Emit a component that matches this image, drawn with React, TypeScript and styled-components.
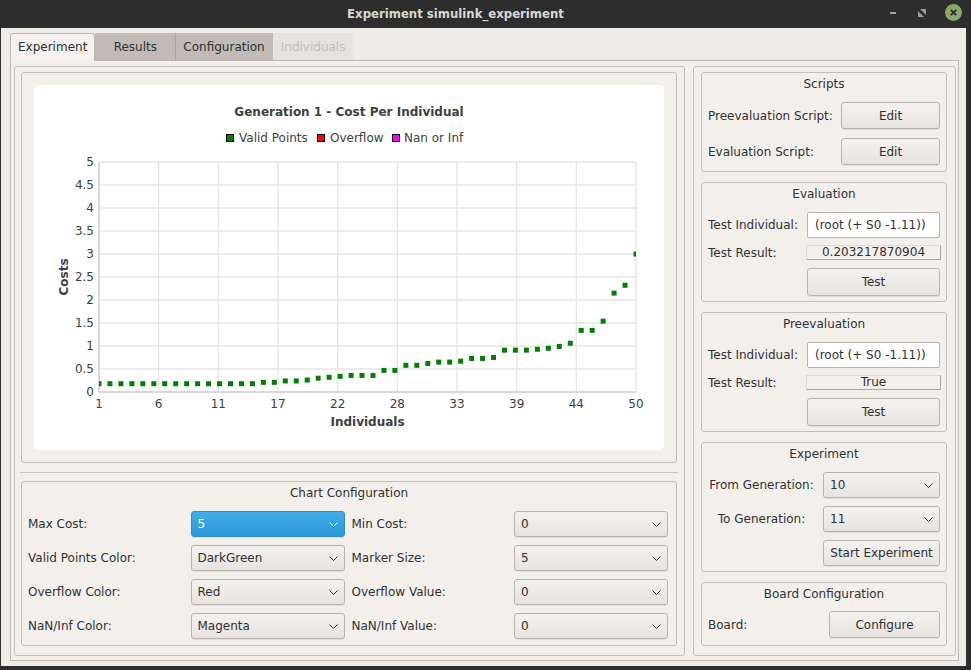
import React from 'react';
import styled, { createGlobalStyle } from 'styled-components';

const GlobalStyle = createGlobalStyle`
  html, body { margin: 0; padding: 0; background: #2d2d2d; }
  body {
    font-family: "DejaVu Sans", "Noto Sans", sans-serif;
    font-size: 12px;
    color: #2f3134;
  }
  * { box-sizing: border-box; }
`;

const Window = styled.div`
  width: 971px;
  height: 670px;
  background: #2d2d2d;
  display: flex;
  flex-direction: column;
  padding: 0 5px 4px 1px;
`;

const TitleBar = styled.div`
  height: 28px;
  display: grid;
  grid-template-columns: 1fr 82px;
  align-items: center;
`;

const TitleText = styled.div`
  padding-left: 26px;
  text-align: center;
  font-family: "DejaVu Sans Condensed", "DejaVu Sans", sans-serif;
  font-weight: bold;
  font-size: 13px;
  color: #d8d8d8;
  padding-bottom: 2px;
`;

const WinButtons = styled.div`
  display: flex;
  align-items: center;
  gap: 17px;
  padding-left: 3px;
  padding-bottom: 3px;
`;

const WinIcon = styled.div<{ $w: number }>`
  width: ${(p) => p.$w}px;
  height: ${(p) => p.$w}px;
  display: flex;
  align-items: center;
  justify-content: center;
`;

const Content = styled.div`
  flex: 1;
  background: #efebe7;
  display: flex;
  flex-direction: column;
  padding: 5px 7px 5px 9px;
`;

const TabBar = styled.div`
  display: flex;
  height: 27px;
  align-items: stretch;
  position: relative;
  z-index: 1;
`;

const Tab = styled.div<{ $state: 'active' | 'normal' | 'disabled'; $sep?: boolean }>`
  min-width: 80px;
  padding: 0 ${(p) => (p.$state === 'active' ? 7 : 8)}px;
  display: flex;
  align-items: center;
  justify-content: center;
  font-size: 12px;
  color: ${(p) => (p.$state === 'disabled' ? '#c3beb9' : '#2f3134')};
  background: ${(p) =>
    p.$state === 'active' ? '#f4f1ee' : p.$state === 'disabled' ? '#e6e2de' : '#c0bbb6'};
  border: ${(p) => (p.$state === 'active' ? '1px solid #bdb8b3' : 'none')};
  border-bottom: none;
  box-shadow: ${(p) => (p.$sep ? 'inset 1px 0 0 #a9a49f' : 'none')};
  border-radius: ${(p) => (p.$state === 'active' ? '3px 3px 0 0' : '0')};
  margin-bottom: ${(p) => (p.$state === 'active' ? '-1px' : '0')};
  padding-bottom: ${(p) => (p.$state === 'active' ? '1px' : '0')};
`;

const Pane = styled.div`
  flex: 1;
  border: 1px solid #bdb8b3;
  background: #f3f0ec;
  display: grid;
  grid-template-columns: 1fr 263px;
  gap: 8px;
  padding: 5px 2px 4px 3px;
`;

const Frame = styled.div`
  border: 1px solid #c3beb9;
  border-radius: 3px;
  display: flex;
  flex-direction: column;
`;

const LeftFrame = styled(Frame)`
  padding: 5px 7px 9px 6px;
`;

const RightFrame = styled(Frame)`
  padding: 5px 8px 9px 7px;
  gap: 10px;
`;

const ChartFrame = styled.div`
  height: 391px;
  border: 1px solid #c3beb9;
  border-radius: 3px;
  padding: 12px;
  display: flex;
`;

const ChartCard = styled.div`
  flex: 1;
  background: #ffffff;
  border-radius: 5px;
  overflow: hidden;
`;

const Splitter = styled.div`
  height: 18px;
  margin: 0 -1px;
  display: flex;
  align-items: center;
  &::after {
    content: '';
    flex: 1;
    height: 1px;
    background: #c8c3be;
  }
`;

const GroupBox = styled.div<{ $h?: number }>`
  border: 1px solid #c3beb9;
  border-radius: 3px;
  display: flex;
  flex-direction: column;
  ${(p) => (p.$h ? `height: ${p.$h}px;` : 'flex: 1;')}
`;

const GroupTitle = styled.div`
  height: 22px;
  line-height: 22px;
  text-align: center;
  font-size: 12px;
`;

const GroupBody = styled.div<{ $gap: number; $pad?: string }>`
  display: flex;
  flex-direction: column;
  gap: ${(p) => p.$gap}px;
  padding: ${(p) => p.$pad || '7px 6px 6px 6px'};
`;

const ConfigGrid = styled.div`
  display: grid;
  grid-template-columns: 1fr 154px 1fr 154px;
  grid-auto-rows: 26px;
  column-gap: 7px;
  row-gap: 8px;
  align-items: center;
  padding: 7px 8px 6px 6px;
`;

const Row = styled.div<{ $h: number; $ctl: number; $center?: boolean }>`
  display: grid;
  grid-template-columns: 1fr ${(p) => p.$ctl}px;
  column-gap: 8px;
  height: ${(p) => p.$h}px;
  align-items: center;
  & > span {
    text-align: ${(p) => (p.$center ? 'center' : 'left')};
  }
`;

const Label = styled.span`
  font-size: 12px;
  white-space: nowrap;
`;

const Button = styled.div<{ $h?: number }>`
  height: ${(p) => p.$h || 27}px;
  display: flex;
  align-items: center;
  justify-content: center;
  background: linear-gradient(to bottom, #f4f2ef, #e7e3df);
  border: 1px solid #b8b3ae;
  border-radius: 3px;
  box-shadow: 0 1px 0 rgba(0, 0, 0, 0.07);
  font-size: 12px;
  white-space: nowrap;
`;

const ComboBox = styled.div<{ $focus?: boolean }>`
  height: 26px;
  display: flex;
  align-items: center;
  justify-content: space-between;
  padding: 0 6px 0 6px;
  border-radius: 3px;
  font-size: 12px;
  border: 1px solid ${(p) => (p.$focus ? '#2b8fcc' : '#b8b3ae')};
  background: ${(p) =>
    p.$focus
      ? 'linear-gradient(to bottom, #40aee9, #2d97d6)'
      : 'linear-gradient(to bottom, #f4f2ef, #e7e3df)'};
  color: ${(p) => (p.$focus ? '#ffffff' : '#2f3134')};
  box-shadow: 0 1px 0 rgba(0, 0, 0, 0.07);
`;

const LineEdit = styled.div`
  height: 26px;
  display: flex;
  align-items: center;
  padding-left: 7px;
  background: #ffffff;
  border: 1px solid #b8b3ae;
  border-radius: 2px;
  font-size: 12px;
  white-space: nowrap;
`;

const ResultBox = styled.div`
  height: 15px;
  margin: 0 -1px;
  display: flex;
  align-items: center;
  justify-content: center;
  border: 1px solid;
  border-color: #dedad6 #a9a49f #a9a49f #dedad6;
  font-size: 12px;
  line-height: 13px;
`;

const Chevron: React.FC = () => (
  <svg width="9" height="5" viewBox="0 0 9 5">
    <polyline points="0.5,0.5 4.5,4.5 8.5,0.5" fill="none" stroke="currentColor" strokeWidth="1" />
  </svg>
);

const Combo: React.FC<{ value: string; focus?: boolean }> = ({ value, focus }) => (
  <ComboBox $focus={focus}>
    <span>{value}</span>
    <Chevron />
  </ComboBox>
);

/* ---------------- Chart ---------------- */
const values: number[] = [
  ...Array(15).fill(0.18),
  0.21, 0.21, 0.24, 0.24, 0.26, 0.3, 0.32, 0.34, 0.36, 0.36, 0.36, 0.47, 0.47, 0.58, 0.58,
  0.62, 0.65, 0.65, 0.67, 0.73, 0.73, 0.75, 0.91, 0.91, 0.91, 0.93, 0.95, 0.99, 1.06,
  1.34, 1.34, 1.54, 2.15, 2.32, 3.0,
];

const PX0 = 65;
const PX1 = 602;
const PY0 = 307;
const PY1 = 77;
const sx = (i: number) => PX0 + ((i - 1) * (PX1 - PX0)) / 49;
const sy = (v: number) => PY0 - (v * (PY0 - PY1)) / 5;
const xTicks = ['1', '6', '11', '17', '22', '28', '33', '39', '44', '50'];

const ChartText = styled.text`
  font-family: "DejaVu Sans", sans-serif;
  font-size: 12px;
  fill: #404040;
`;

const Chart: React.FC = () => {
  const gridX = xTicks.map((_, k) => PX0 + (k * (PX1 - PX0)) / 9);
  const gridY = Array.from({ length: 11 }, (_, k) => k * 0.5);
  return (
    <svg width="630" height="365" viewBox="0 0 630 365">
      <defs>
        <clipPath id="plot">
          <rect x={PX0} y={PY1} width={PX1 - PX0} height={PY0 - PY1} />
        </clipPath>
      </defs>
      <ChartText x="315" y="31" textAnchor="middle" fontWeight="bold">
        Generation 1 - Cost Per Individual
      </ChartText>
      <rect x="192.5" y="49.5" width="7" height="7" fill="#008000" stroke="#000" />
      <ChartText x="205" y="57">Valid Points</ChartText>
      <rect x="283.5" y="49.5" width="7" height="7" fill="#ff0000" stroke="#000" />
      <ChartText x="296" y="57">Overflow</ChartText>
      <rect x="358.5" y="49.5" width="7" height="7" fill="#ff00ff" stroke="#000" />
      <ChartText x="370" y="57">Nan or Inf</ChartText>

      {gridY.map((v) => (
        <line key={'h' + v} x1={PX0} x2={PX1} y1={sy(v)} y2={sy(v)} stroke="#e6e6e6" strokeWidth="1.4" />
      ))}
      {gridX.map((x, k) => (
        <line key={'v' + k} x1={x} x2={x} y1={PY1} y2={PY0} stroke="#e6e6e6" strokeWidth="1.4" />
      ))}
      <line x1={PX0} x2={PX1} y1={PY0} y2={PY0} stroke="#d9d9d9" strokeWidth="2" />
      <line x1={PX0} x2={PX0} y1={PY1} y2={PY0} stroke="#d9d9d9" strokeWidth="2" />

      {gridY.map((v) => (
        <ChartText key={'yl' + v} x="60" y={sy(v) + 4.4} textAnchor="end">
          {Number.isInteger(v) ? String(v) : v.toFixed(1)}
        </ChartText>
      ))}
      {xTicks.map((t, k) => (
        <ChartText key={'xl' + t} x={gridX[k]} y="323" textAnchor="middle">
          {t}
        </ChartText>
      ))}
      <ChartText x="333.5" y="341" textAnchor="middle" fontWeight="bold">
        Individuals
      </ChartText>
      <ChartText x="33.5" y="192" textAnchor="middle" fontWeight="bold" transform="rotate(-90 33.5 192)">
        Costs
      </ChartText>

      <g clipPath="url(#plot)">
        {values.map((v, i) => (
          <rect key={i} x={sx(i + 1) - 2.5} y={sy(v) - 2.5} width="5" height="5" fill="#008000" />
        ))}
      </g>
    </svg>
  );
};

export default function App() {
  return (
    <>
      <GlobalStyle />
      <Window>
        <TitleBar>
          <TitleText>Experiment simulink_experiment</TitleText>
          <WinButtons>
            <WinIcon $w={12}>
              <svg width="8" height="2" viewBox="0 0 8 2">
                <rect x="1" y="0" width="6" height="2" fill="#9d9d9d" />
              </svg>
            </WinIcon>
            <WinIcon $w={12}>
              <svg width="8" height="8" viewBox="0 0 8 8">
                <polygon points="2,0 8,0 8,6" fill="#9a9a9a" />
                <polygon points="0,2 6,8 0,8" fill="#9a9a9a" />
              </svg>
            </WinIcon>
            <WinIcon $w={17}>
              <svg width="17" height="17" viewBox="0 0 17 17">
                <circle cx="8.5" cy="8.5" r="8.5" fill="#87a96a" />
                <path d="M5.8 5.8 L11.2 11.2 M11.2 5.8 L5.8 11.2" stroke="#2b2b2b" strokeWidth="1.8" />
              </svg>
            </WinIcon>
          </WinButtons>
        </TitleBar>
        <Content>
          <TabBar>
            <Tab $state="active">Experiment</Tab>
            <Tab $state="normal">Results</Tab>
            <Tab $state="normal" $sep>Configuration</Tab>
            <Tab $state="disabled">Individuals</Tab>
          </TabBar>
          <Pane>
            <LeftFrame>
              <ChartFrame>
                <ChartCard>
                  <Chart />
                </ChartCard>
              </ChartFrame>
              <Splitter />
              <GroupBox>
                <GroupTitle>Chart Configuration</GroupTitle>
                <ConfigGrid>
                  <Label>Max Cost:</Label>
                  <Combo value="5" focus />
                  <Label>Min Cost:</Label>
                  <Combo value="0" />
                  <Label>Valid Points Color:</Label>
                  <Combo value="DarkGreen" />
                  <Label>Marker Size:</Label>
                  <Combo value="5" />
                  <Label>Overflow Color:</Label>
                  <Combo value="Red" />
                  <Label>Overflow Value:</Label>
                  <Combo value="0" />
                  <Label>NaN/Inf Color:</Label>
                  <Combo value="Magenta" />
                  <Label>NaN/Inf Value:</Label>
                  <Combo value="0" />
                </ConfigGrid>
              </GroupBox>
            </LeftFrame>
            <RightFrame>
              <GroupBox $h={100}>
                <GroupTitle>Scripts</GroupTitle>
                <GroupBody $gap={9}>
                  <Row $h={27} $ctl={99}>
                    <Label>Preevaluation Script:</Label>
                    <Button>Edit</Button>
                  </Row>
                  <Row $h={27} $ctl={99}>
                    <Label>Evaluation Script:</Label>
                    <Button>Edit</Button>
                  </Row>
                </GroupBody>
              </GroupBox>
              <GroupBox $h={120}>
                <GroupTitle>Evaluation</GroupTitle>
                <GroupBody $gap={7}>
                  <Row $h={26} $ctl={133}>
                    <Label>Test Individual:</Label>
                    <LineEdit>(root (+ S0 -1.11))</LineEdit>
                  </Row>
                  <Row $h={15} $ctl={133}>
                    <Label>Test Result:</Label>
                    <ResultBox>0.203217870904</ResultBox>
                  </Row>
                  <Row $h={29} $ctl={133}>
                    <span />
                    <Button $h={28}>Test</Button>
                  </Row>
                </GroupBody>
              </GroupBox>
              <GroupBox $h={120}>
                <GroupTitle>Preevaluation</GroupTitle>
                <GroupBody $gap={7}>
                  <Row $h={26} $ctl={133}>
                    <Label>Test Individual:</Label>
                    <LineEdit>(root (+ S0 -1.11))</LineEdit>
                  </Row>
                  <Row $h={15} $ctl={133}>
                    <Label>Test Result:</Label>
                    <ResultBox>True</ResultBox>
                  </Row>
                  <Row $h={29} $ctl={133}>
                    <span />
                    <Button $h={28}>Test</Button>
                  </Row>
                </GroupBody>
              </GroupBox>
              <GroupBox $h={130}>
                <GroupTitle>Experiment</GroupTitle>
                <GroupBody $gap={8}>
                  <Row $h={26} $ctl={117} $center>
                    <Label>From Generation:</Label>
                    <Combo value="10" />
                  </Row>
                  <Row $h={26} $ctl={117} $center>
                    <Label>To Generation:</Label>
                    <Combo value="11" />
                  </Row>
                  <Row $h={26} $ctl={117}>
                    <span />
                    <Button $h={26}>Start Experiment</Button>
                  </Row>
                </GroupBody>
              </GroupBox>
              <GroupBox $h={64}>
                <GroupTitle>Board Configuration</GroupTitle>
                <GroupBody $gap={0} $pad="6px 6px 6px 6px">
                  <Row $h={27} $ctl={111}>
                    <Label>Board:</Label>
                    <Button>Configure</Button>
                  </Row>
                </GroupBody>
              </GroupBox>
            </RightFrame>
          </Pane>
        </Content>
      </Window>
    </>
  );
}
